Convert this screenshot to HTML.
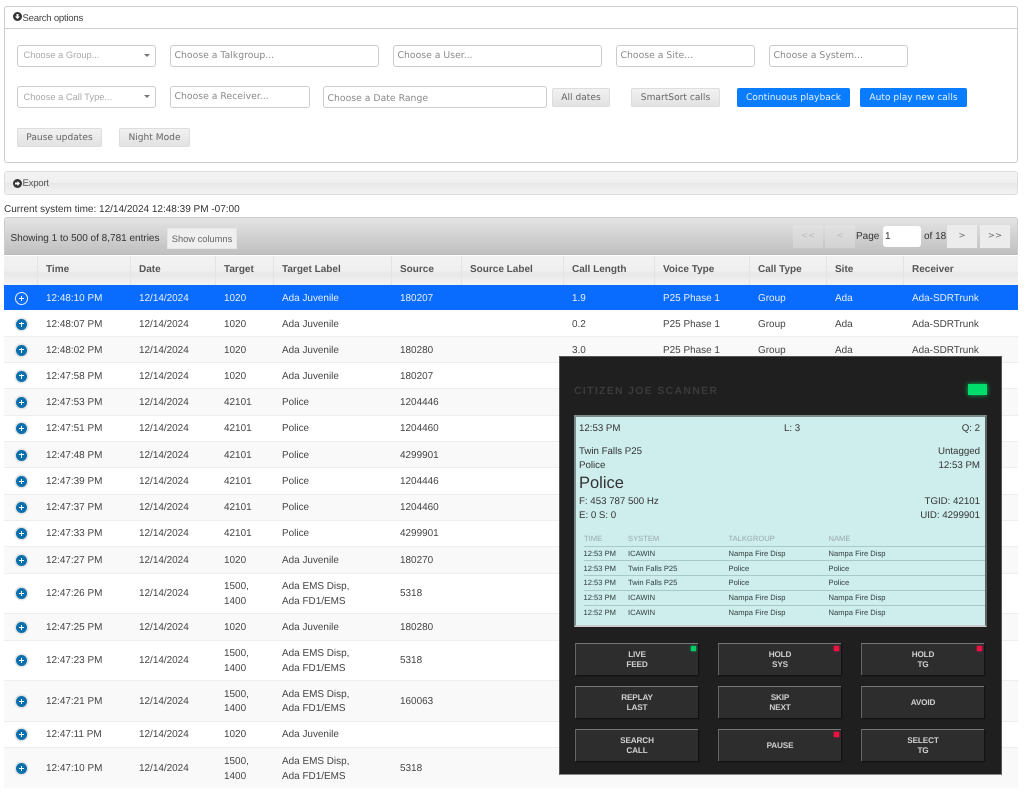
<!DOCTYPE html>
<html lang="en"><head><meta charset="utf-8"><title>Citizen Joe Scanner</title>
<style>
*{box-sizing:border-box}
html{margin:0;padding:0;background:#fff;width:1024px;height:795px;overflow:hidden}
body{margin:0;padding:0;background:#fff;width:1024px;height:795px;overflow:hidden;position:relative;font-family:"Liberation Sans",sans-serif;font-size:10px;color:#333;text-rendering:geometricPrecision;filter:blur(.3px)}
.a{position:absolute}
.panel{position:absolute;left:4px;width:1014px;border:1px solid #ccc;border-radius:3px}
.ph{position:absolute;left:12px;font-size:9.6px;color:#444;letter-spacing:-.25px}
.ic{position:absolute;left:12.5px;width:9px;height:9px;display:block}
.in{position:absolute;border:1px solid #ccc;border-radius:3px;background:#fff;font-family:"DejaVu Sans",sans-serif;font-size:9.3px;color:#8a8a8a;padding-left:3.5px;height:22px;line-height:19px}
.sel{position:absolute;border:1px solid #ccc;border-radius:3px;background:#fff;font-size:9.3px;color:#aaa;padding-left:5.5px;height:22px;line-height:19.5px;width:139px;left:17px}
.sel:after{content:"";position:absolute;right:5px;top:8px;border-top:3.5px solid #777;border-left:3px solid transparent;border-right:3px solid transparent}
.b{position:absolute;height:19px;line-height:19.5px;text-align:center;font-family:"DejaVu Sans",sans-serif;font-size:9.1px;color:#666;background:linear-gradient(#f1f1f1,#e2e2e2);border:1px solid #ddd;border-radius:2px}
.bl{background:#0a7cff;border-color:#0a7cff;color:#e6f1ff}
.pg{position:absolute;top:225px;height:23px;line-height:22px;width:30px;text-align:center;background:#ececec;font-family:"DejaVu Sans",sans-serif;font-size:8.5px;color:#666}
.r{position:absolute;left:4px;width:1014px;display:flex;align-items:center;background:#fff;border-bottom:1px solid #eee;color:#444;font-size:9.95px;line-height:14.6px}
.r.o{background:#f9f9f9}
.r.s{background:#0a6bff;color:#e8f1ff;border-bottom:1px solid #fff}
.r span{display:block;flex:none;padding-left:8px}
.r span:not(.c0){position:relative;top:1.5px}
.c0{width:34px;padding-left:0!important;position:relative;align-self:stretch}
.r .c0:after{content:"";position:absolute;left:12px;top:50%;margin-top:-5px;width:11px;height:11px;border-radius:50%;background:linear-gradient(#fff,#fff) center/5px 1.2px no-repeat,linear-gradient(#fff,#fff) center/1.2px 5px no-repeat,#0a6fad;box-shadow:0 0 0 1.5px #e4e4e4}
.r.s .c0:after{background:linear-gradient(#fff,#fff) center/5px 1px no-repeat,linear-gradient(#fff,#fff) center/1px 5px no-repeat,#0a6bff;box-shadow:0 0 0 1px #e8f1ff}
.c1{width:93px}.c2{width:85px}.c3{width:58px}.c4{width:118px}.c5{width:70px}.c6{width:102px}.c7{width:91px}.c8{width:95px}.c9{width:77px}.c10{width:77px}.c11{width:113px}
.hd{position:absolute;left:4px;width:1014px;top:256px;height:29px;display:flex;background:linear-gradient(#f2f2f2 0,#f0f0f0 50%,#e8e8e8 60%,#f4f4f4 100%);font-weight:bold;font-size:10px;color:#555;line-height:28.5px}
.hd span{display:block;flex:none;padding-left:8px;border-right:1px solid #e4e4e4}
.scan{position:absolute;left:559px;top:356px;width:443px;height:419px;background:#1f1f1f;border:1px solid #555;border-bottom-color:#888}
.lcd{position:absolute;left:574px;top:415px;width:413px;height:212px;background:#ceeded;border:2px solid #7d8a8a;border-right-color:#5d6464;border-bottom-color:#ccc;color:#333;font-size:9.7px}
.lcd div{position:absolute;white-space:nowrap}
.th{color:#9aabab;font-size:7.6px;top:117px}
.t{font-size:7.6px;color:#334040}
.ln{left:8px;width:401px;height:1px;background:#a9c9c9}
.k{position:absolute;width:123px;height:32px;background:#2d2d2d;border-top:1px solid #777;border-left:1px solid #666;box-shadow:1px 1px 1px #111;color:#d0d0d0;font-weight:bold;font-size:8.2px;letter-spacing:-.15px;line-height:10px;text-align:center;display:flex;align-items:center;justify-content:center}
.led{position:absolute;right:2px;top:2px;width:5px;height:5px;background:#ee1144;box-shadow:0 0 2px #ee1144}
.led.g{background:#0c6;box-shadow:0 0 2px #0c6}
</style></head><body>

<div class="panel" style="top:6px;height:157px"></div>
<div class="a" style="left:5px;top:28px;width:1012px;height:1px;background:#ccc"></div>
<svg class="ic" style="top:12px" viewBox="0 0 9 9"><circle cx="4.5" cy="4.5" r="4.5" fill="#333"/><path d="M3.5 2h2v2.5h1.5L4.5 7 2 4.5h1.5z" fill="#fff"/></svg>
<div class="ph" style="left:22.5px;top:12.5px">Search options</div>

<div class="sel" style="top:45px">Choose a Group...</div>
<div class="in" style="left:170px;top:45px;width:209px">Choose a Talkgroup...</div>
<div class="in" style="left:393px;top:45px;width:209px">Choose a User...</div>
<div class="in" style="left:616px;top:45px;width:139px">Choose a Site...</div>
<div class="in" style="left:769px;top:45px;width:139px">Choose a System...</div>

<div class="sel" style="top:86px;line-height:20.5px">Choose a Call Type...</div>
<div class="in" style="left:170px;top:86px;width:140px;line-height:20px">Choose a Receiver...</div>
<div class="in" style="left:323px;top:86px;width:223.5px;line-height:23px">Choose a Date Range</div>
<div class="b" style="left:552px;top:88px;width:58px">All dates</div>
<div class="b" style="left:631px;top:88px;width:89px">SmartSort calls</div>
<div class="b bl" style="left:737px;top:88px;width:113px">Continuous playback</div>
<div class="b bl" style="left:860px;top:88px;width:107px">Auto play new calls</div>
<div class="b" style="left:17px;top:128px;width:85px">Pause updates</div>
<div class="b" style="left:119px;top:128px;width:71px">Night Mode</div>

<div class="panel" style="top:171px;height:24px;background:linear-gradient(#f3f3f3 0,#f0f0f0 48%,#e8e8e8 50%,#f3f3f3 100%);border-color:#ddd"></div>
<svg class="ic" style="top:178.5px" viewBox="0 0 9 9"><circle cx="4.5" cy="4.5" r="4.5" fill="#333"/><path d="M2 3.5h2.5V2L7 4.5 4.5 7V5.5H2z" fill="#fff"/></svg>
<div class="ph" style="left:22.5px;top:178px;color:#555">Export</div>

<div class="a" style="left:4px;top:204px;font-size:10px;color:#333">Current system time: 12/14/2024 12:48:39 PM -07:00</div>

<div class="a" style="left:4px;top:217px;width:1014px;height:38px;background:linear-gradient(#e3e3e3,#c0c0c0);border:1px solid #ccc;border-radius:3px 3px 0 0;border-bottom:1px solid #bbb"></div>
<div class="a" style="left:10.5px;top:232.5px;font-size:10px;color:#333">Showing 1 to 500 of 8,781 entries</div>
<div class="a" style="left:167px;top:228px;width:70px;height:21px;line-height:20px;background:#efefef;border:1px solid #e6e6e6;text-align:center;font-size:9.3px;color:#666">Show columns</div>
<div class="pg" style="left:793px;color:#bbb;background:rgba(236,236,236,.35)">&lt;&lt;</div>
<div class="pg" style="left:825px;color:#bbb;background:rgba(236,236,236,.35)">&lt;</div>
<div class="a" style="left:856px;top:230.5px;font-size:10px;color:#333">Page</div>
<div class="a" style="left:883px;top:226px;width:38px;height:21px;background:#fff;border-radius:3px;font-size:10px;line-height:21px;padding-left:2px;color:#333">1</div>
<div class="a" style="left:924px;top:230.5px;font-size:10px;color:#333">of 18</div>
<div class="pg" style="left:947px">&gt;</div>
<div class="pg" style="left:980px">&gt;&gt;</div>

<div class="hd"><span class="c0" style="display:block"></span><span class="c1">Time</span><span class="c2">Date</span><span class="c3">Target</span><span class="c4">Target Label</span><span class="c5">Source</span><span class="c6">Source Label</span><span class="c7">Call Length</span><span class="c8">Voice Type</span><span class="c9">Call Type</span><span class="c10">Site</span><span class="c11" style="border:0">Receiver</span></div>

<div class="r s" style="top:285px;height:26px"><span class="c0"></span><span class="c1">12:48:10 PM</span><span class="c2">12/14/2024</span><span class="c3">1020</span><span class="c4">Ada Juvenile</span><span class="c5">180207</span><span class="c6"></span><span class="c7">1.9</span><span class="c8">P25 Phase 1</span><span class="c9">Group</span><span class="c10">Ada</span><span class="c11">Ada-SDRTrunk</span></div>
<div class="r" style="top:311px;height:26px"><span class="c0"></span><span class="c1">12:48:07 PM</span><span class="c2">12/14/2024</span><span class="c3">1020</span><span class="c4">Ada Juvenile</span><span class="c5"></span><span class="c6"></span><span class="c7">0.2</span><span class="c8">P25 Phase 1</span><span class="c9">Group</span><span class="c10">Ada</span><span class="c11">Ada-SDRTrunk</span></div>
<div class="r o" style="top:337px;height:26px"><span class="c0"></span><span class="c1">12:48:02 PM</span><span class="c2">12/14/2024</span><span class="c3">1020</span><span class="c4">Ada Juvenile</span><span class="c5">180280</span><span class="c6"></span><span class="c7">3.0</span><span class="c8">P25 Phase 1</span><span class="c9">Group</span><span class="c10">Ada</span><span class="c11">Ada-SDRTrunk</span></div>
<div class="r" style="top:363px;height:26px"><span class="c0"></span><span class="c1">12:47:58 PM</span><span class="c2">12/14/2024</span><span class="c3">1020</span><span class="c4">Ada Juvenile</span><span class="c5">180207</span></div>
<div class="r o" style="top:389px;height:26.5px"><span class="c0"></span><span class="c1">12:47:53 PM</span><span class="c2">12/14/2024</span><span class="c3">42101</span><span class="c4">Police</span><span class="c5">1204446</span></div>
<div class="r" style="top:415.5px;height:26.5px"><span class="c0"></span><span class="c1">12:47:51 PM</span><span class="c2">12/14/2024</span><span class="c3">42101</span><span class="c4">Police</span><span class="c5">1204460</span></div>
<div class="r o" style="top:442px;height:26px"><span class="c0"></span><span class="c1">12:47:48 PM</span><span class="c2">12/14/2024</span><span class="c3">42101</span><span class="c4">Police</span><span class="c5">4299901</span></div>
<div class="r" style="top:468px;height:26.5px"><span class="c0"></span><span class="c1">12:47:39 PM</span><span class="c2">12/14/2024</span><span class="c3">42101</span><span class="c4">Police</span><span class="c5">1204446</span></div>
<div class="r o" style="top:494.5px;height:26px"><span class="c0"></span><span class="c1">12:47:37 PM</span><span class="c2">12/14/2024</span><span class="c3">42101</span><span class="c4">Police</span><span class="c5">1204460</span></div>
<div class="r" style="top:520.5px;height:26.5px"><span class="c0"></span><span class="c1">12:47:33 PM</span><span class="c2">12/14/2024</span><span class="c3">42101</span><span class="c4">Police</span><span class="c5">4299901</span></div>
<div class="r o" style="top:547px;height:26.5px"><span class="c0"></span><span class="c1">12:47:27 PM</span><span class="c2">12/14/2024</span><span class="c3">1020</span><span class="c4">Ada Juvenile</span><span class="c5">180270</span></div>
<div class="r" style="top:573.5px;height:40.5px"><span class="c0"></span><span class="c1">12:47:26 PM</span><span class="c2">12/14/2024</span><span class="c3">1500,<br>1400</span><span class="c4">Ada EMS Disp,<br>Ada FD1/EMS</span><span class="c5">5318</span></div>
<div class="r o" style="top:614px;height:26.5px"><span class="c0"></span><span class="c1">12:47:25 PM</span><span class="c2">12/14/2024</span><span class="c3">1020</span><span class="c4">Ada Juvenile</span><span class="c5">180280</span></div>
<div class="r" style="top:640.5px;height:40.5px"><span class="c0"></span><span class="c1">12:47:23 PM</span><span class="c2">12/14/2024</span><span class="c3">1500,<br>1400</span><span class="c4">Ada EMS Disp,<br>Ada FD1/EMS</span><span class="c5">5318</span></div>
<div class="r o" style="top:681px;height:40.5px"><span class="c0"></span><span class="c1">12:47:21 PM</span><span class="c2">12/14/2024</span><span class="c3">1500,<br>1400</span><span class="c4">Ada EMS Disp,<br>Ada FD1/EMS</span><span class="c5">160063</span></div>
<div class="r" style="top:721.5px;height:26.5px"><span class="c0"></span><span class="c1">12:47:11 PM</span><span class="c2">12/14/2024</span><span class="c3">1020</span><span class="c4">Ada Juvenile</span><span class="c5"></span></div>
<div class="r o" style="top:748px;height:40px;border-bottom:0"><span class="c0"></span><span class="c1">12:47:10 PM</span><span class="c2">12/14/2024</span><span class="c3">1500,<br>1400</span><span class="c4">Ada EMS Disp,<br>Ada FD1/EMS</span><span class="c5">5318</span></div>

<div class="scan"></div>
<div class="a" style="left:574px;top:385px;font-size:10.5px;font-weight:bold;letter-spacing:1.3px;color:#3a3a3a">CITIZEN JOE SCANNER</div>
<div class="a" style="left:968px;top:384px;width:19px;height:11px;background:#00dd6a;box-shadow:0 0 5px #00c060"></div>

<div class="lcd">
<div style="left:3px;top:6px">12:53 PM</div>
<div style="left:208px;top:6px">L: 3</div>
<div style="right:5px;top:6px">Q: 2</div>
<div style="left:3px;top:29px">Twin Falls P25</div>
<div style="right:5px;top:29px">Untagged</div>
<div style="left:3px;top:43px">Police</div>
<div style="right:5px;top:43px">12:53 PM</div>
<div style="left:3px;top:57px;font-size:16.5px">Police</div>
<div style="left:3px;top:79px">F: 453 787 500 Hz</div>
<div style="right:5px;top:79px">TGID: 42101</div>
<div style="left:3px;top:93px">E: 0 S: 0</div>
<div style="right:5px;top:93px">UID: 4299901</div>

<div class="th" style="left:8px">TIME</div><div class="th" style="left:52px">SYSTEM</div><div class="th" style="left:152.5px">TALKGROUP</div><div class="th" style="left:252.5px">NAME</div>
<div class="ln" style="top:129px"></div>
<div class="t" style="left:7.5px;top:132px">12:53 PM</div><div class="t" style="left:52px;top:132px">ICAWIN</div><div class="t" style="left:152.5px;top:132px">Nampa Fire Disp</div><div class="t" style="left:252.5px;top:132px">Nampa Fire Disp</div>
<div class="ln" style="top:143px"></div>
<div class="t" style="left:7.5px;top:147px">12:53 PM</div><div class="t" style="left:52px;top:147px">Twin Falls P25</div><div class="t" style="left:152.5px;top:147px">Police</div><div class="t" style="left:252.5px;top:147px">Police</div>
<div class="ln" style="top:158px"></div>
<div class="t" style="left:7.5px;top:161px">12:53 PM</div><div class="t" style="left:52px;top:161px">Twin Falls P25</div><div class="t" style="left:152.5px;top:161px">Police</div><div class="t" style="left:252.5px;top:161px">Police</div>
<div class="ln" style="top:173px"></div>
<div class="t" style="left:7.5px;top:176px">12:53 PM</div><div class="t" style="left:52px;top:176px">ICAWIN</div><div class="t" style="left:152.5px;top:176px">Nampa Fire Disp</div><div class="t" style="left:252.5px;top:176px">Nampa Fire Disp</div>
<div class="ln" style="top:188px"></div>
<div class="t" style="left:7.5px;top:191px">12:52 PM</div><div class="t" style="left:52px;top:191px">ICAWIN</div><div class="t" style="left:152.5px;top:191px">Nampa Fire Disp</div><div class="t" style="left:252.5px;top:191px">Nampa Fire Disp</div>
</div>

<div class="k" style="left:575px;top:643px"><i class="led g"></i>LIVE<br>FEED</div>
<div class="k" style="left:718px;top:643px"><i class="led"></i>HOLD<br>SYS</div>
<div class="k" style="left:861px;top:643px"><i class="led"></i>HOLD<br>TG</div>
<div class="k" style="left:575px;top:686px">REPLAY<br>LAST</div>
<div class="k" style="left:718px;top:686px">SKIP<br>NEXT</div>
<div class="k" style="left:861px;top:686px">AVOID</div>
<div class="k" style="left:575px;top:729px">SEARCH<br>CALL</div>
<div class="k" style="left:718px;top:729px"><i class="led"></i>PAUSE</div>
<div class="k" style="left:861px;top:729px">SELECT<br>TG</div>
</body></html>
